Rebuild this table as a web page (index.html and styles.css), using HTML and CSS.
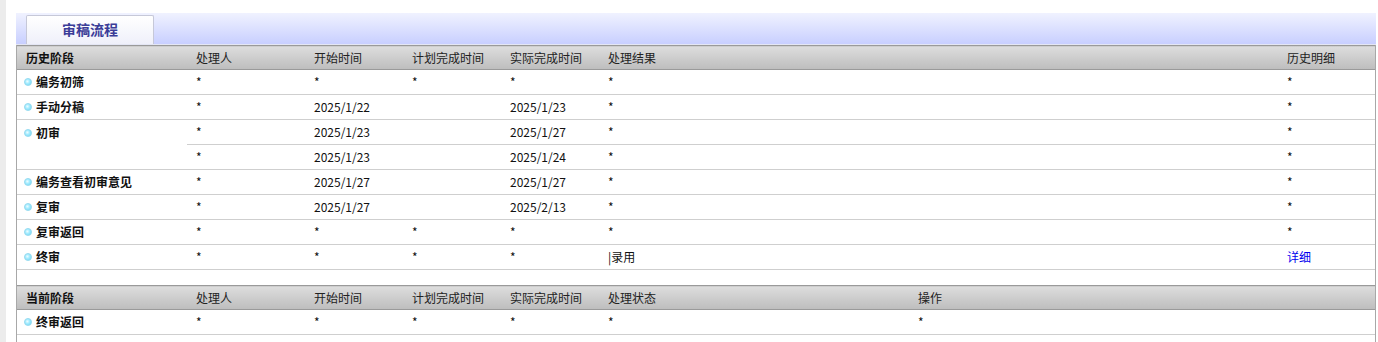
FILE: index.html
```html
<!DOCTYPE html>
<html lang="zh-CN">
<head>
<meta charset="utf-8">
<title>审稿流程</title>
<link rel="stylesheet" href="styles.css">
</head>
<body>
<div class="page">
  <div class="side"></div>
  <div class="main">
    <div class="tabbar">
      <div class="tab">审稿流程</div>
    </div>
    <div class="panel">
      <table class="grid">
        <colgroup>
          <col class="c1"><col class="c2"><col class="c3"><col class="c4"><col class="c5"><col class="c6"><col class="c7">
        </colgroup>
        <thead>
          <tr><th class="first">历史阶段</th><th>处理人</th><th>开始时间</th><th>计划完成时间</th><th>实际完成时间</th><th>处理结果</th><th>历史明细</th></tr>
        </thead>
        <tbody>
          <tr><td class="stage"><span class="dot"></span>编务初筛</td><td>*</td><td>*</td><td>*</td><td>*</td><td>*</td><td>*</td></tr>
          <tr><td class="stage"><span class="dot"></span>手动分稿</td><td>*</td><td>2025/1/22</td><td></td><td>2025/1/23</td><td>*</td><td>*</td></tr>
          <tr><td class="stage top" rowspan="2"><span class="dot"></span>初审</td><td>*</td><td>2025/1/23</td><td></td><td>2025/1/27</td><td>*</td><td>*</td></tr>
          <tr><td>*</td><td>2025/1/23</td><td></td><td>2025/1/24</td><td>*</td><td>*</td></tr>
          <tr><td class="stage"><span class="dot"></span>编务查看初审意见</td><td>*</td><td>2025/1/27</td><td></td><td>2025/1/27</td><td>*</td><td>*</td></tr>
          <tr><td class="stage"><span class="dot"></span>复审</td><td>*</td><td>2025/1/27</td><td></td><td>2025/2/13</td><td>*</td><td>*</td></tr>
          <tr><td class="stage"><span class="dot"></span>复审返回</td><td>*</td><td>*</td><td>*</td><td>*</td><td>*</td><td>*</td></tr>
          <tr><td class="stage"><span class="dot"></span>终审</td><td>*</td><td>*</td><td>*</td><td>*</td><td>|录用</td><td><a class="link" href="#">详细</a></td></tr>
          <tr class="spacer"><td colspan="7"></td></tr>
        </tbody>
      </table>
      <table class="grid">
        <colgroup>
          <col class="c1"><col class="c2"><col class="c3"><col class="c4"><col class="c5"><col class="c6b"><col class="c7b">
        </colgroup>
        <thead>
          <tr><th class="first">当前阶段</th><th>处理人</th><th>开始时间</th><th>计划完成时间</th><th>实际完成时间</th><th>处理状态</th><th>操作</th></tr>
        </thead>
        <tbody>
          <tr><td class="stage"><span class="dot"></span>终审返回</td><td>*</td><td>*</td><td>*</td><td>*</td><td>*</td><td>*</td></tr>
        </tbody>
      </table>
    </div>
  </div>
</div>
</body>
</html>
```

FILE: styles.css
```css
html, body {
  margin: 0;
  padding: 0;
  background: #fff;
}
body {
  font-family: "Noto Sans CJK SC", "Noto Sans", sans-serif;
  font-size: 12px;
  color: #111;
}
.page {
  display: flex;
  min-height: 342px;
}
.side {
  width: 6px;
  background: #ececec;
  flex: none;
}
.main {
  padding: 13px 0 0 10px;
  width: 1360px;
  display: flex;
  flex-direction: column;
}
.tabbar {
  background: linear-gradient(#f0f2ff, #c8cfff);
  display: flex;
  align-items: flex-end;
  border-bottom: 1px solid #e4e6f4;
  box-sizing: border-box;
  height: 32px;
}
.tab {
  margin-left: 10px;
  width: 128px;
  height: 29px;
  box-sizing: border-box;
  border: 1px solid #c6c8d8;
  border-bottom: none;
  border-radius: 2px 2px 0 0;
  background: linear-gradient(#ffffff, #eff0fa);
  color: #3b3d98;
  font-weight: bold;
  font-size: 14px;
  display: flex;
  align-items: center;
  justify-content: center;
  padding-bottom: 2px;
}
.panel {
  border-left: 1px solid #a8a8a8;
  border-right: 1px solid #a8a8a8;
  width: 1360px;
  box-sizing: border-box;
  flex: 1;
}
.grid {
  width: 100%;
  border-collapse: collapse;
  table-layout: fixed;
}
.c1 { width: 170px; }
.c2 { width: 118px; }
.c3, .c4, .c5 { width: 98px; }
.c6 { width: 679px; }
.c7 { width: 97px; }
.c6b { width: 310px; }
.c7b { width: 466px; }
.grid th {
  height: 22px;
  padding: 0 0 1px 9px;
  text-align: left;
  font-weight: normal;
  color: #222;
  background: linear-gradient(#dddddd, #bdbdbd);
  border-top: 1px solid #9a9a9a;
  border-bottom: 1px solid #9a9a9a;
}
.grid th.first {
  font-weight: bold;
  color: #111;
}
.grid td {
  height: 23px;
  padding: 0 0 1px 9px;
  border-bottom: 1px solid #cfcfcf;
  white-space: nowrap;
}
.grid td.stage {
  padding-left: 7px;
  font-weight: bold;
}
.grid td.top {
  vertical-align: top;
  padding-top: 4px;
  height: auto;
}
.dot {
  display: inline-block;
  width: 8px;
  height: 8px;
  border-radius: 50%;
  margin-right: 4px;
  vertical-align: 1px;
  box-sizing: border-box;
  background: radial-gradient(circle at 40% 40%, #f0fdff 0, #a6ecff 40%, #66d2f4 100%);
  border: 1px solid #9adcf0;
}
.spacer td {
  height: 15px;
  padding: 0;
  border-bottom: none;
}
.link {
  color: #0000ee;
  text-decoration: none;
}
```
